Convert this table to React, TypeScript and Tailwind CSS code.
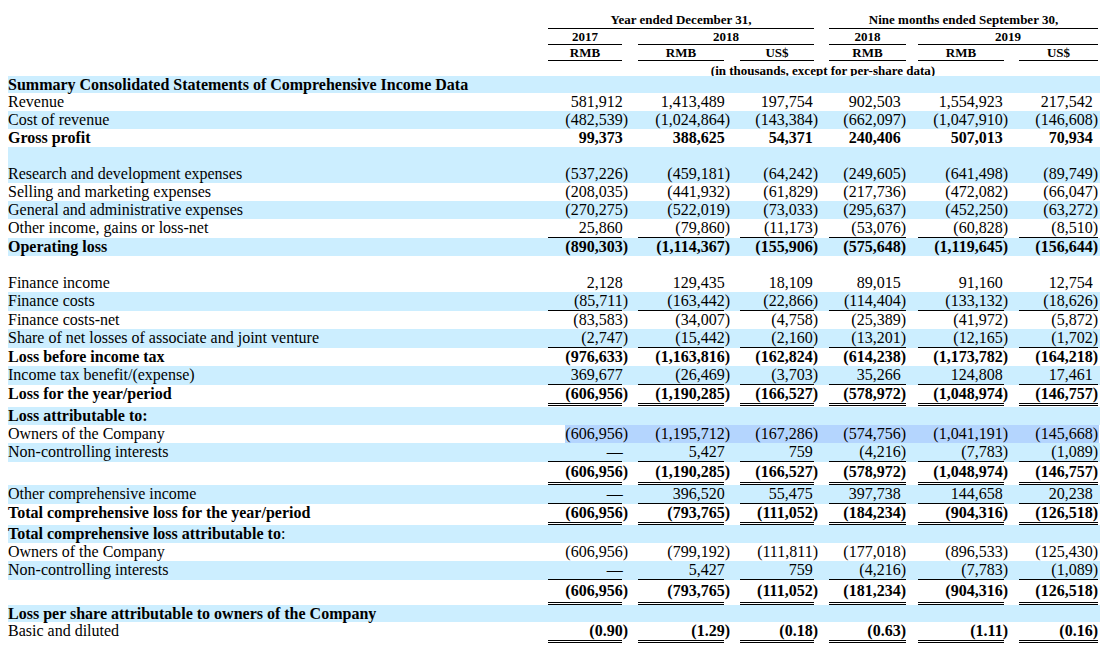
import React from 'react';

type Row = {
  label: React.ReactNode;
  bold?: boolean;
  boldVals?: boolean;
  blue?: boolean;
  sel?: boolean;
  vals?: string[];
  line?: 'single' | 'double';
  h?: string;
  lh?: string;
};

const widths = ['w-[74px]', 'w-[86px]', 'w-[74px]', 'w-[77px]', 'w-[86px]', 'w-[79px]'];
const gaps = ['ml-0', 'ml-[16px]', 'ml-[16px]', 'ml-[15px]', 'ml-[12px]', 'ml-[15px]'];
const hangs = ['-mr-[6px]', '-mr-[6px]', '-mr-[4px]', 'mr-0', '-mr-[4px]', 'mr-0'];

const rows: Row[] = [
  { label: 'Summary Consolidated Statements of Comprehensive Income Data', bold: true, blue: true, h: 'h-[17px]', lh: 'leading-[17px]' },
  { label: 'Revenue', vals: ['581,912', '1,413,489', '197,754', '902,503', '1,554,923', '217,542'] },
  { label: 'Cost of revenue', blue: true, vals: ['(482,539)', '(1,024,864)', '(143,384)', '(662,097)', '(1,047,910)', '(146,608)'] },
  { label: 'Gross profit', bold: true, vals: ['99,373', '388,625', '54,371', '240,406', '507,013', '70,934'] },
  { label: '', blue: true },
  { label: 'Research and development expenses', blue: true, vals: ['(537,226)', '(459,181)', '(64,242)', '(249,605)', '(641,498)', '(89,749)'] },
  { label: 'Selling and marketing expenses', vals: ['(208,035)', '(441,932)', '(61,829)', '(217,736)', '(472,082)', '(66,047)'] },
  { label: 'General and administrative expenses', blue: true, vals: ['(270,275)', '(522,019)', '(73,033)', '(295,637)', '(452,250)', '(63,272)'] },
  { label: 'Other income, gains or loss-net', vals: ['25,860', '(79,860)', '(11,173)', '(53,076)', '(60,828)', '(8,510)'], line: 'single' },
  { label: 'Operating loss', bold: true, blue: true, vals: ['(890,303)', '(1,114,367)', '(155,906)', '(575,648)', '(1,119,645)', '(156,644)'] },
  { label: '' },
  { label: 'Finance income', vals: ['2,128', '129,435', '18,109', '89,015', '91,160', '12,754'] },
  { label: 'Finance costs', blue: true, vals: ['(85,711)', '(163,442)', '(22,866)', '(114,404)', '(133,132)', '(18,626)'], line: 'single' },
  { label: 'Finance costs-net', vals: ['(83,583)', '(34,007)', '(4,758)', '(25,389)', '(41,972)', '(5,872)'] },
  { label: 'Share of net losses of associate and joint venture', blue: true, vals: ['(2,747)', '(15,442)', '(2,160)', '(13,201)', '(12,165)', '(1,702)'], line: 'single' },
  { label: 'Loss before income tax', bold: true, vals: ['(976,633)', '(1,163,816)', '(162,824)', '(614,238)', '(1,173,782)', '(164,218)'] },
  { label: 'Income tax benefit/(expense)', blue: true, vals: ['369,677', '(26,469)', '(3,703)', '35,266', '124,808', '17,461'], line: 'single' },
  { label: 'Loss for the year/period', bold: true, vals: ['(606,956)', '(1,190,285)', '(166,527)', '(578,972)', '(1,048,974)', '(146,757)'], line: 'double', h: 'h-[22px]' },
  { label: 'Loss attributable to:', bold: true, blue: true },
  { label: 'Owners of the Company', sel: true, vals: ['(606,956)', '(1,195,712)', '(167,286)', '(574,756)', '(1,041,191)', '(145,668)'] },
  { label: 'Non-controlling interests', blue: true, vals: ['—', '5,427', '759', '(4,216)', '(7,783)', '(1,089)'], line: 'single' },
  { label: '', boldVals: true, vals: ['(606,956)', '(1,190,285)', '(166,527)', '(578,972)', '(1,048,974)', '(146,757)'], line: 'double', h: 'h-[23px]', lh: 'leading-[20px]' },
  { label: 'Other comprehensive income', blue: true, vals: ['—', '396,520', '55,475', '397,738', '144,658', '20,238'], line: 'single' },
  { label: 'Total comprehensive loss for the year/period', bold: true, vals: ['(606,956)', '(793,765)', '(111,052)', '(184,234)', '(904,316)', '(126,518)'], line: 'double', h: 'h-[21px]' },
  { label: <><b>Total comprehensive loss attributable to</b>:</>, blue: true },
  { label: 'Owners of the Company', vals: ['(606,956)', '(799,192)', '(111,811)', '(177,018)', '(896,533)', '(125,430)'] },
  { label: 'Non-controlling interests', blue: true, vals: ['—', '5,427', '759', '(4,216)', '(7,783)', '(1,089)'], line: 'single' },
  { label: '', boldVals: true, vals: ['(606,956)', '(793,765)', '(111,052)', '(181,234)', '(904,316)', '(126,518)'], line: 'double', h: 'h-[25px]', lh: 'leading-[22px]' },
  { label: 'Loss per share attributable to owners of the Company', bold: true, blue: true, h: 'h-[17px]', lh: 'leading-[17px]' },
  { label: 'Basic and diluted', boldVals: true, vals: ['(0.90)', '(1.29)', '(0.18)', '(0.63)', '(1.11)', '(0.16)'], line: 'double', h: 'h-[21px]' },
];

function Num({ v }: { v: string }) {
  // numbers without a closing paren keep a blank slot so the digits line up
  if (v.endsWith(')')) return <>{v}</>;
  return (
    <>
      {v}
      <span className="invisible">)</span>
    </>
  );
}

function BodyRow({ row }: { row: Row }) {
  const height = row.h ?? (row.line === 'single' ? 'h-[19px]' : 'h-[18px]');
  const lh = row.lh ?? 'leading-[18px]';
  const border =
    row.line === 'single'
      ? 'border-b border-black'
      : row.line === 'double'
      ? 'border-b-[3px] border-double border-black'
      : '';
  return (
    <div className={`relative flex items-start ${height} ${row.blue ? 'bg-[#cceeff]' : ''}`}>
      {row.sel && <div className="absolute inset-y-0 left-[557px] w-[534px] bg-[#b4d5fe]" />}
      <div className={`relative w-[540px] shrink-0 whitespace-nowrap ${lh} ${row.bold ? 'font-bold' : ''}`}>
        {row.label}
      </div>
      {row.vals &&
        row.vals.map((v, i) => (
          <div key={i} className={`relative shrink-0 ${widths[i]} ${gaps[i]} ${border}`}>
            <div className={`text-right whitespace-nowrap ${lh} ${hangs[i]} ${row.bold || row.boldVals ? 'font-bold' : ''}`}>
              <Num v={v} />
            </div>
          </div>
        ))}
    </div>
  );
}

function Header() {
  const cell = 'shrink-0 text-center border-b border-black';
  return (
    <div className="pt-[12px] text-[13px] font-bold">
      <div className="flex leading-[16px]">
        <div className="w-[540px] shrink-0" />
        <div className={`${cell} w-[266px]`}>Year ended December 31,</div>
        <div className={`${cell} ml-[15px] w-[269px]`}>Nine months ended September 30,</div>
      </div>
      <div className="flex leading-[15px]">
        <div className="w-[540px] shrink-0" />
        <div className={`${cell} w-[74px]`}>2017</div>
        <div className={`${cell} ml-[16px] w-[176px]`}>2018</div>
        <div className={`${cell} ml-[15px] w-[77px]`}>2018</div>
        <div className={`${cell} ml-[12px] w-[180px]`}>2019</div>
      </div>
      <div className="flex leading-[15px]">
        <div className="w-[540px] shrink-0" />
        {['RMB', 'RMB', 'US$', 'RMB', 'RMB', 'US$'].map((t, i) => (
          <div key={i} className={`${cell} ${widths[i]} ${gaps[i]}`}>
            {t}
          </div>
        ))}
      </div>
      <div className="flex h-[15px] leading-[15px] pt-[2px]">
        <div className="w-[540px] shrink-0" />
        <div className="w-[550px] shrink-0 text-center whitespace-nowrap">(in thousands, except for per-share data)</div>
      </div>
    </div>
  );
}

export default function App() {
  return (
    <div className="w-[1108px] h-[648px] overflow-hidden bg-white text-black font-['Liberation_Serif','Times_New_Roman',serif]">
      <div className="mx-[8px] w-[1092px]">
        <Header />
        <div className="text-[16px]">
          {rows.map((r, i) => (
            <BodyRow key={i} row={r} />
          ))}
        </div>
      </div>
    </div>
  );
}
